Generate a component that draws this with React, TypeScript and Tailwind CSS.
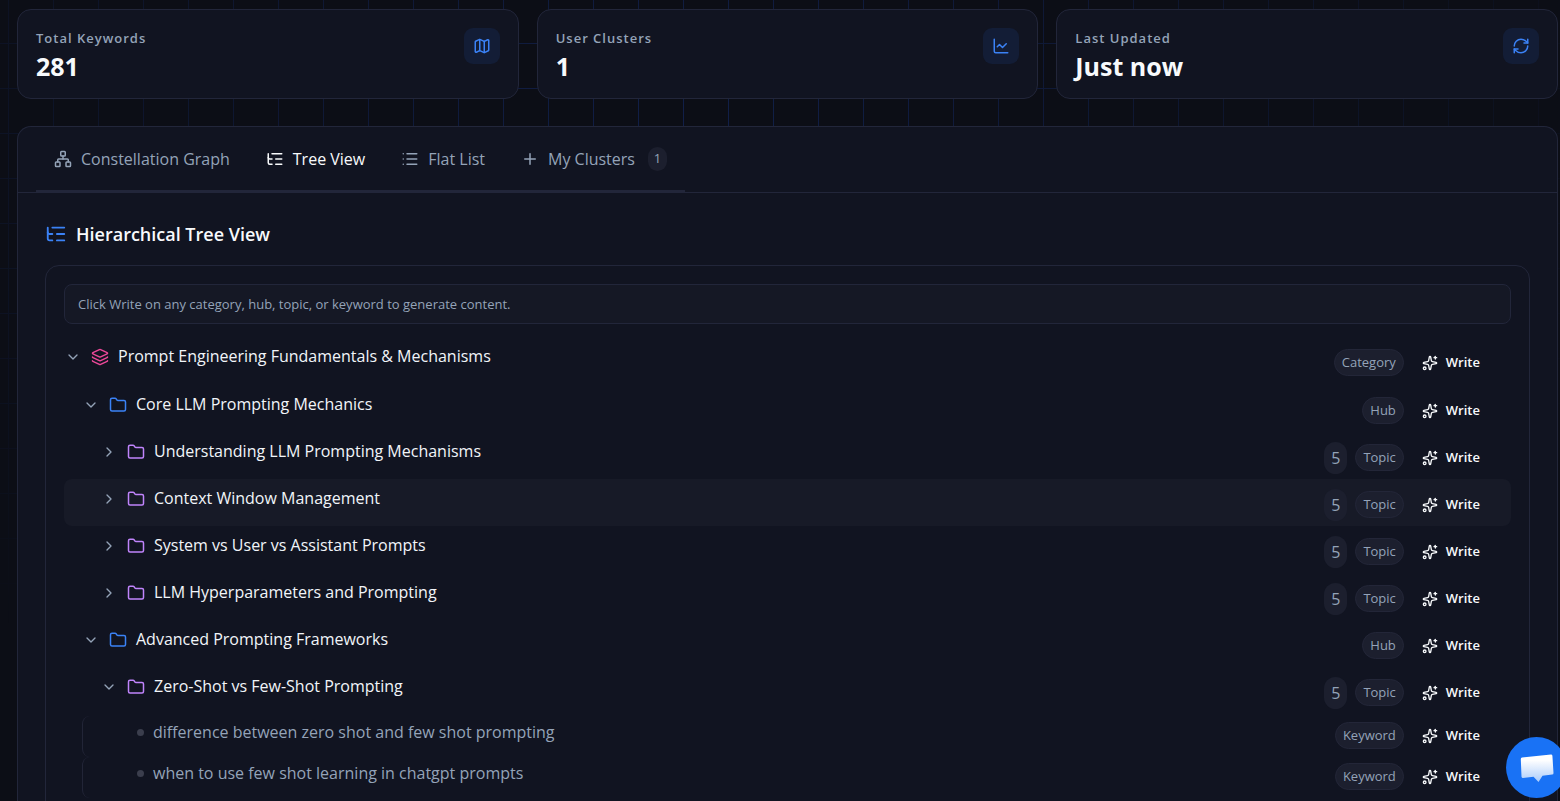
import { useState } from "react";
import {
  ChartLine,
  ChevronDown,
  ChevronRight,
  Folder,
  Layers,
  List,
  ListTree,
  Map,
  Network,
  Plus,
  RefreshCw,
  Sparkles,
} from "lucide-react";

type NodeKind = "Category" | "Hub" | "Topic";

const stats = [
  { label: "Total Keywords", value: "281", icon: Map },
  { label: "User Clusters", value: "1", icon: ChartLine },
  { label: "Last Updated", value: "Just now", icon: RefreshCw },
];

const tabs = [
  { id: "graph", label: "Constellation Graph", icon: Network },
  { id: "tree", label: "Tree View", icon: ListTree },
  { id: "list", label: "Flat List", icon: List },
  { id: "clusters", label: "My Clusters", icon: Plus, count: 1 },
];

const nodes: { title: string; kind: NodeKind; open: boolean; count?: number }[] = [
  { title: "Prompt Engineering Fundamentals & Mechanisms", kind: "Category", open: true },
  { title: "Core LLM Prompting Mechanics", kind: "Hub", open: true },
  { title: "Understanding LLM Prompting Mechanisms", kind: "Topic", open: false, count: 5 },
  { title: "Context Window Management", kind: "Topic", open: false, count: 5 },
  { title: "System vs User vs Assistant Prompts", kind: "Topic", open: false, count: 5 },
  { title: "LLM Hyperparameters and Prompting", kind: "Topic", open: false, count: 5 },
  { title: "Advanced Prompting Frameworks", kind: "Hub", open: true },
  { title: "Zero-Shot vs Few-Shot Prompting", kind: "Topic", open: true, count: 5 },
];

const keywords = [
  "difference between zero shot and few shot prompting",
  "when to use few shot learning in chatgpt prompts",
];

const indent = { Category: "pl-0", Hub: "pl-[18px]", Topic: "pl-[36px]" };
const iconColor = { Category: "text-[#ec4899]", Hub: "text-[#3b82f6]", Topic: "text-[#c084fc]" };

function Actions({ kind, count }: { kind: string; count?: number }) {
  return (
    <div className="flex items-center">
      {count && (
        <span className="mr-2 flex h-8 w-[23px] items-center justify-center rounded-full bg-[#1c1f2e] text-base text-[#94a3b8]">{count}</span>
      )}
      <span className="flex h-[27px] items-center rounded-full border border-[#232638] bg-[#1c1f2e] px-[7px] text-[13px] text-[#94a3b8]">{kind}</span>
      <button className="ml-[18px] flex items-center gap-2 text-[13px] font-semibold text-[#f8fafc]">
        <Sparkles size={16} /> Write
      </button>
    </div>
  );
}

function TreeRow({ node }: { node: (typeof nodes)[number] }) {
  const [open, setOpen] = useState(node.open);
  const Chevron = open ? ChevronDown : ChevronRight;
  const Icon = node.kind === "Category" ? Layers : Folder;
  const active = node.title === "Context Window Management";

  return (
    <li className={`flex min-h-[47px] items-start justify-between rounded-lg pr-[31px] ${active ? "bg-[#171a27]" : ""} ${node.kind === "Category" ? "mb-px" : ""}`}>
      <div className={`flex items-center pt-[6px] ${indent[node.kind]}`}>
        <button aria-label={`Toggle ${node.title}`} aria-expanded={open} onClick={() => setOpen(!open)} className="flex w-[18px] justify-center text-[#94a3b8]">
          <Chevron size={16} />
        </button>
        <Icon size={18} className={`ml-[9px] ${iconColor[node.kind]}`} />
        <span className="ml-[9px] text-base font-medium leading-[27px] text-[#f1f5f9]">{node.title}</span>
      </div>
      <div className="flex h-[47px] items-center pt-1">
        <Actions kind={node.kind} count={node.count} />
      </div>
    </li>
  );
}

function KeywordRow({ text }: { text: string }) {
  return (
    <li className="ml-[18px] flex min-h-[41px] items-start justify-between rounded-lg border-l border-[#222537] pr-[31px]">
      <div className="flex items-center pt-[3px] pl-[54px]">
        <span className="size-[7px] rounded-full bg-[#3b3e4d]" />
        <span className="ml-[9px] text-base leading-[27px] text-[#94a3b8]">{text}</span>
      </div>
      <div className="flex h-[39px] items-center">
        <Actions kind="Keyword" />
      </div>
    </li>
  );
}

function ChatButton() {
  return (
    <button aria-label="Open chat" className="fixed top-[737px] -right-[7px] flex size-[61px] items-center justify-center rounded-full bg-[#1972f5]">
      <svg width="36" height="32" viewBox="0 0 36 32" aria-hidden="true">
        <defs>
          <linearGradient id="bubble" x1="0" y1="0" x2="0" y2="1">
            <stop offset="0.2" stopColor="#ffffff" />
            <stop offset="1" stopColor="#a9cbfb" />
          </linearGradient>
        </defs>
        <path d="M3 5.500 32 2.500q1.300 0 1.400 1.200L34.500 21q0 1.500-1.300 1.600L23.500 23.700 19.500 30 14.500 24.700 4 26q-1.300 0-1.500-1.200L1.800 7q0-1.400 1.200-1.500z" fill="url(#bubble)" />
      </svg>
    </button>
  );
}

export default function App() {
  const [tab, setTab] = useState("tree");

  return (
    <div className="relative isolate h-screen overflow-hidden bg-[#0c0e16] font-['Open_Sans','Noto_Sans',sans-serif] text-[#f8fafc]">
      <div className="absolute inset-0 -z-10 bg-[linear-gradient(to_right,#11204a_1px,transparent_1px),linear-gradient(to_bottom,#11204a_1px,transparent_1px)] bg-size-[45px_45px] bg-position-[8px_43px] mask-[radial-gradient(ellipse_1000px_700px_at_45%_15%,black_0%,transparent_100%)]" />
      <main className="pt-[9px] pr-[2px] pl-[17px]">
        <div className="grid grid-cols-3 gap-[18px]">
          {stats.map(({ label, value, icon: Icon }) => (
            <section key={label} className="flex items-start justify-between rounded-[14px] border border-[#22263a] bg-[#111421] px-[18px] pt-[18px] pb-[14px]">
              <div>
                <p className="text-[13px] font-semibold leading-5 tracking-[1px] text-[#94a3b8]">{label}</p>
                <p className="text-[25px] font-bold leading-9">{value}</p>
              </div>
              <div className="flex size-9 items-center justify-center rounded-[9px] bg-[#131d36] text-[#3b82f6]">
                <Icon size={18} />
              </div>
            </section>
          ))}
        </div>

        <div className="mt-[27px] rounded-t-[14px] border border-b-0 border-[#22263a] bg-[#111421]">
          <div className="flex border-b border-[#22263a] px-[18px]">
            <div role="tablist" className="-mb-px flex border-b-3 border-[#22263a] pb-[18px]">
              {tabs.map(({ id, label, icon: Icon, count }) => (
                <button
                  key={id}
                  role="tab"
                  aria-selected={tab === id}
                  onClick={() => setTab(id)}
                  className={`flex h-[45px] items-center px-[18px] pt-[18px] text-base font-medium ${tab === id ? "text-[#f8fafc]" : "text-[#94a3b8]"}`}
                >
                  <Icon size={18} />
                  <span className="ml-[9px]">{label}</span>
                  {count && <span className="ml-[13px] flex h-6 w-[19px] items-center justify-center rounded-full bg-[#1c1f2e] text-[13px]">{count}</span>}
                </button>
              ))}
            </div>
          </div>

          <div className="p-[27px]">
            <h2 className="flex items-center gap-[9px] text-lg font-semibold leading-7">
              <ListTree size={22} className="text-[#3b82f6]" /> Hierarchical Tree View
            </h2>
            <div className="mt-[17px] rounded-[14px] border border-[#22263a] p-[18px]">
              <p className="rounded-lg border border-[#22263a] bg-[#151825] px-[13px] py-[9px] text-[13px] leading-5 text-[#94a3b8]">
                Click Write on any category, hub, topic, or keyword to generate content.
              </p>
              <ul className="mt-[13px]">
                {nodes.map((node) => (
                  <TreeRow key={node.title} node={node} />
                ))}
              </ul>
              <ul className="mt-[2px]">
                {keywords.map((text) => (
                  <KeywordRow key={text} text={text} />
                ))}
              </ul>
            </div>
          </div>
        </div>
      </main>
      <ChatButton />
    </div>
  );
}
